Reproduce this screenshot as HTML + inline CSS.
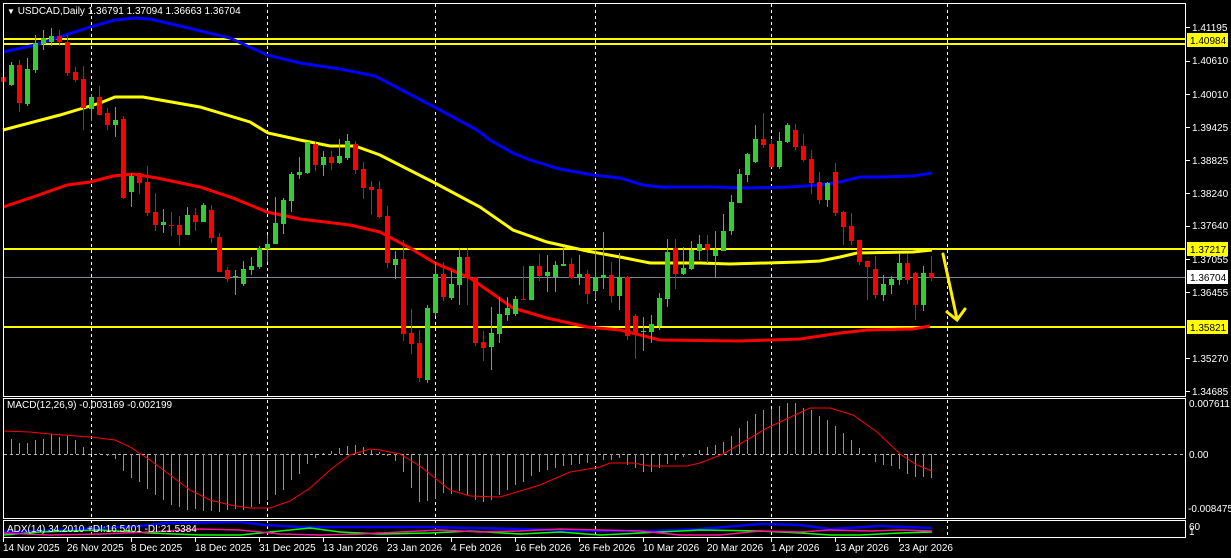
<!DOCTYPE html>
<html><head><meta charset="utf-8"><style>
html,body{margin:0;padding:0;background:#000;width:1231px;height:558px;overflow:hidden}
svg{display:block}
text{font-family:"Liberation Sans",sans-serif;font-size:10px;fill:#fff}
</style></head><body>
<svg width="1231" height="558" viewBox="0 0 1231 558" xmlns="http://www.w3.org/2000/svg">
<rect width="1231" height="558" fill="#000"/>
<g stroke="#fff" stroke-dasharray="3,3" stroke-width="1">
<path d="M91.5 4V537M267.5 4V537M435.5 4V537M595.5 4V537M771.5 4V537M947.5 4V537"/>
</g>
<path d="M4 454.5H1186" stroke="#bbb" stroke-dasharray="3,3"/>
<path d="M4 277.5H1186" stroke="#778899"/>
<g stroke="#ffff00" stroke-width="2">
<path d="M4 39H1186M4 44H1186M4 249H1186M4 327H1186"/>
</g>
<polyline fill="none" stroke="#0000ff" stroke-width="3" points="3,52 35,45 90,27 115,20 135,18 150,19 180,26 230,38 267,55 300,63 340,69 375,76 400,89 440,110 477,130 490,140 513,153 530,160 560,169 593,175 620,178 643,185 660,187 713,187 750,188 790,187 820,185 840,182 860,177 880,177 913,176 932,173"/>
<polyline fill="none" stroke="#ffff00" stroke-width="3" points="3,130 60,115 100,103 115,97 143,97 200,107 250,122 268,133 300,140 330,146 355,146 380,155 435,183 480,207 513,230 547,242 587,251 620,257 650,263 700,263 730,264 800,262 820,261 840,257 857,253 913,252 932,250"/>
<polyline fill="none" stroke="#ff0000" stroke-width="3" points="3,207 33,197 67,185 90,182 113,176 133,174 157,178 200,187 233,198 267,212 300,219 350,225 380,232 410,248 435,263 470,278 513,308 547,318 587,327 620,330 660,340 740,341 800,339 840,333 867,330 913,329 930,326"/>
<g stroke="#32cd32" fill="none">
<path stroke-width="1" d="M11.5 62V86M27.5 58V106M35.5 35V73M43.5 30V50M51.5 28V46M91.5 94V121M115.5 107V137M131.5 173V207M163.5 209V233M187.5 207V235M203.5 203V222M235.5 270V295M243.5 261V286M251.5 257V275M259.5 246V269M267.5 235V262M275.5 197V244M283.5 198V234M291.5 172V212M299.5 157V179M307.5 142V174M323.5 151V176M339.5 139V164M347.5 134V160M395.5 251V279M427.5 305V383M435.5 262V316M451.5 271V300M459.5 248V305M491.5 307V370M499.5 297V343M507.5 297V321M515.5 296V316M531.5 266V300M547.5 255V292M555.5 261V292M563.5 247V266M579.5 255V285M595.5 250V299M603.5 232V289M619.5 253V310M643.5 317V351M651.5 315V343M659.5 293V330M667.5 239V307M683.5 247V275M691.5 241V270M699.5 235V260M715.5 231V278M723.5 214V251M731.5 195V235M739.5 169V203M747.5 153V182M755.5 125V163M779.5 132V169M787.5 123V143M827.5 182V207M883.5 275V301M891.5 276V294M899.5 254V285M923.5 266V311"/>
<path stroke-width="5" d="M11.5 65V85M27.5 69V104M35.5 43V70M43.5 38V44M51.5 36V42M91.5 97V109M115.5 120V125M131.5 176V192M163.5 222V225M187.5 215V235M203.5 205V222M235.5 276V277M243.5 269V284M251.5 266V270M259.5 248V267M267.5 244V249M275.5 223V244M283.5 200V224M291.5 174V201M299.5 172V175M307.5 142V173M323.5 157V165M339.5 156V163M347.5 141V158M395.5 259V265M427.5 308V380M435.5 274V313M451.5 284V298M459.5 257V285M491.5 333V347M499.5 314V334M507.5 308V315M515.5 299V314M531.5 266V300M547.5 272V276M555.5 265V277M563.5 264V266M579.5 274V277M595.5 277V291M603.5 275V278M619.5 277V296M643.5 331V332M651.5 324V332M659.5 298V326M667.5 252V299M683.5 268V274M691.5 250V269M699.5 244V251M715.5 250V256M723.5 231V251M731.5 202V231M739.5 174V203M747.5 154V175M755.5 139V162M779.5 141V167M787.5 125V142M827.5 183V200M883.5 284V295M891.5 279V285M899.5 263V280M923.5 273V305"/>
</g>
<g stroke="#ff0000" fill="none">
<path stroke-width="1" d="M3.5 69V88M19.5 60V112M59.5 30V46M67.5 35V76M75.5 67V82M83.5 66V130M99.5 86V115M107.5 108V130M123.5 116V199M139.5 173V194M147.5 166V216M155.5 193V231M171.5 212V236M179.5 216V246M195.5 208V231M211.5 205V243M219.5 233V272M227.5 267V282M315.5 141V171M331.5 151V170M355.5 141V174M363.5 162V199M371.5 181V215M379.5 181V218M387.5 206V268M403.5 240V341M411.5 309V354M419.5 330V382M443.5 262V301M467.5 248V305M475.5 277V346M483.5 331V361M523.5 266V300M539.5 254V281M571.5 258V279M587.5 270V304M611.5 262V303M627.5 276V340M635.5 314V359M675.5 239V289M707.5 235V263M763.5 113V148M771.5 140V167M795.5 124V150M803.5 134V162M811.5 150V194M819.5 172V204M835.5 163V216M843.5 211V245M851.5 213V245M859.5 240V265M867.5 261V300M875.5 256V299M907.5 254V284M915.5 272V320M931.5 256V281"/>
<path stroke-width="5" d="M3.5 77V82M19.5 65V103M59.5 36V42M67.5 42V73M75.5 72V80M83.5 79V108M99.5 97V115M107.5 113V125M123.5 119V198M139.5 173V183M147.5 182V213M155.5 212V225M171.5 225V226M179.5 225V235M195.5 215V222M211.5 210V238M219.5 237V272M227.5 270V279M315.5 144V165M331.5 157V163M355.5 144V170M363.5 169V188M371.5 187V190M379.5 189V217M387.5 216V263M403.5 259V334M411.5 333V344M419.5 343V378M443.5 274V297M467.5 257V276M475.5 277V343M483.5 342V348M523.5 299V300M539.5 266V276M571.5 264V278M587.5 274V294M611.5 275V296M627.5 277V336M635.5 316V334M675.5 248V274M707.5 244V250M763.5 139V145M771.5 144V167M795.5 130V147M803.5 146V160M811.5 159V183M819.5 182V200M835.5 172V213M843.5 212V227M851.5 226V241M859.5 240V262M867.5 261V267M875.5 269V295M907.5 263V280M915.5 273V305M931.5 273V278"/>
</g>
<g stroke="#ffee00" stroke-width="3" fill="none" stroke-linecap="round">
<path d="M943 254L957 319M947 312L957 320L965 309"/>
</g>
<path stroke="#44cc44" stroke-width="1" fill="none" d="M3.5 454V438M11.5 454V439M19.5 454V443M27.5 454V443M35.5 454V440M43.5 454V439M51.5 454V434M59.5 454V437M67.5 454V436M75.5 454V440M83.5 454V447M91.5 454V450M99.5 454V453M107.5 454V456M115.5 454V459M123.5 454V471M131.5 454V478M139.5 454V482M147.5 454V489M155.5 454V495M163.5 454V500M171.5 454V505M179.5 454V507M187.5 454V510M195.5 454V509M203.5 454V511M211.5 454V511M219.5 454V512M227.5 454V510M235.5 454V509M243.5 454V510M251.5 454V507M259.5 454V504M267.5 454V500M275.5 454V495M283.5 454V490M291.5 454V480M299.5 454V474M307.5 454V464M315.5 454V458M323.5 454V453M331.5 454V451M339.5 454V448M347.5 454V446M355.5 454V445M363.5 454V447M371.5 454V450M379.5 454V452M387.5 454V456M395.5 454V461M403.5 454V472M411.5 454V488M419.5 454V502M427.5 454V501M435.5 454V499M443.5 454V493M451.5 454V494M459.5 454V491M467.5 454V495M475.5 454V500M483.5 454V502M491.5 454V500M499.5 454V495M507.5 454V490M515.5 454V485M523.5 454V482M531.5 454V476M539.5 454V472M547.5 454V470M555.5 454V468M563.5 454V466M571.5 454V465M579.5 454V464M587.5 454V463M595.5 454V461M603.5 454V460M611.5 454V460M619.5 454V458M627.5 454V465M635.5 454V468M643.5 454V472M651.5 454V472M659.5 454V468M667.5 454V464M675.5 454V460M683.5 454V457M699.5 454V450M707.5 454V447M715.5 454V445M723.5 454V442M731.5 454V436M739.5 454V428M747.5 454V421M755.5 454V414M763.5 454V410M771.5 454V409M779.5 454V406M787.5 454V403M795.5 454V403M803.5 454V408M811.5 454V410M819.5 454V416M827.5 454V420M835.5 454V426M843.5 454V433M851.5 454V440M859.5 454V448M875.5 454V462M883.5 454V465M891.5 454V466M899.5 454V469M907.5 454V474M915.5 454V477M923.5 454V477M931.5 454V478"/>
<polyline fill="none" stroke="#ff0000" stroke-width="1" points="3,431 30,432 50,434 90,437 115,440 130,447 150,460 170,475 190,490 210,500 230,505 250,508 270,508 290,501 310,488 330,470 350,455 370,449 380,450 400,454 420,466 435,478 450,490 470,496 500,497 540,485 570,472 600,467 610,463 633,463 650,466 687,466 700,463 723,454 767,428 810,408 830,408 853,415 877,432 900,454 917,465 932,471"/>
<polyline fill="none" stroke="#0000ff" stroke-width="2.5" points="3,532 60,530 100,528 140,526 167,523 240,522 265,525 300,527 400,527 430,527 470,528 520,529 560,530 600,531 650,531 700,529 760,524 800,525 830,529 880,526 932,528"/>
<polyline fill="none" stroke="#00ff00" stroke-width="1.5" points="3,535 40,532 100,530 150,533 200,535 240,535 280,531 310,528 340,532 380,534 430,533 470,531 520,534 560,532 600,535 640,533 700,530 760,531 800,533 830,535 860,535 900,533 932,532"/>
<polyline fill="none" stroke="#ff1493" stroke-width="1.5" points="3,533 50,535 100,534 150,532 200,529 240,530 280,534 320,535 360,534 400,532 440,530 480,532 520,531 560,529 600,530 640,531 680,535 720,535 760,531 800,532 830,530 870,531 900,530 932,531"/>
<g fill="none" stroke="#fff" stroke-width="1">
<rect x="3.5" y="3.5" width="1182" height="393"/>
<rect x="3.5" y="398.5" width="1182" height="120"/>
<rect x="3.5" y="520.5" width="1182" height="17"/>
</g>
<path stroke="#fff" d="M1186 27.5h4M1186 61.5h4M1186 94.5h4M1186 127.5h4M1186 160.5h4M1186 193.5h4M1186 226.5h4M1186 259.5h4M1186 292.5h4M1186 358.5h4M1186 391.5h4M3.5 538v4M67.5 538v4M131.5 538v4M195.5 538v4M259.5 538v4M323.5 538v4M387.5 538v4M451.5 538v4M515.5 538v4M579.5 538v4M643.5 538v4M707.5 538v4M771.5 538v4M835.5 538v4M899.5 538v4"/>
<g>
<text x="1192" y="31">1.41195</text>
<text x="1190" y="48" style="fill:#000">1.40899</text>
<rect x="1187" y="33" width="41" height="14" fill="#ffff00"/>
<text x="1190" y="44" style="fill:#000">1.40984</text>
<text x="1192" y="64">1.40610</text>
<text x="1192" y="98">1.40010</text>
<text x="1192" y="131">1.39425</text>
<text x="1192" y="164">1.38825</text>
<text x="1192" y="197">1.38240</text>
<text x="1192" y="229">1.37640</text>
<rect x="1187" y="242" width="41" height="14" fill="#ffff00"/>
<text x="1190" y="253" style="fill:#000">1.37217</text>
<text x="1192" y="263">1.37055</text>
<rect x="1187" y="270" width="41" height="14" fill="#fff"/>
<text x="1190" y="281" style="fill:#000">1.36704</text>
<text x="1192" y="296">1.36455</text>
<rect x="1187" y="320" width="41" height="14" fill="#ffff00"/>
<text x="1190" y="331" style="fill:#000">1.35821</text>
<text x="1192" y="362">1.35270</text>
<text x="1192" y="395">1.34685</text>
<text x="1189" y="407">0.007611</text>
<text x="1189" y="458">0.00</text>
<text x="1188" y="512">-0.008475</text>
<text x="1189" y="530">60</text>
<text x="1189" y="535">1</text>
</g>
<text x="7" y="14"><tspan font-size="8">▼</tspan> USDCAD,Daily  1.36791 1.37094 1.36663 1.36704</text>
<text x="7" y="408">MACD(12,26,9) -0.003169 -0.002199</text>
<text x="7" y="532">ADX(14) 34.2010 +DI:16.5401 -DI:21.5384</text>
<g>
<text x="3" y="551">14 Nov 2025</text>
<text x="67" y="551">26 Nov 2025</text>
<text x="131" y="551">8 Dec 2025</text>
<text x="195" y="551">18 Dec 2025</text>
<text x="259" y="551">31 Dec 2025</text>
<text x="323" y="551">13 Jan 2026</text>
<text x="387" y="551">23 Jan 2026</text>
<text x="451" y="551">4 Feb 2026</text>
<text x="515" y="551">16 Feb 2026</text>
<text x="579" y="551">26 Feb 2026</text>
<text x="643" y="551">10 Mar 2026</text>
<text x="707" y="551">20 Mar 2026</text>
<text x="771" y="551">1 Apr 2026</text>
<text x="835" y="551">13 Apr 2026</text>
<text x="899" y="551">23 Apr 2026</text>
</g>
</svg>
</body></html>
